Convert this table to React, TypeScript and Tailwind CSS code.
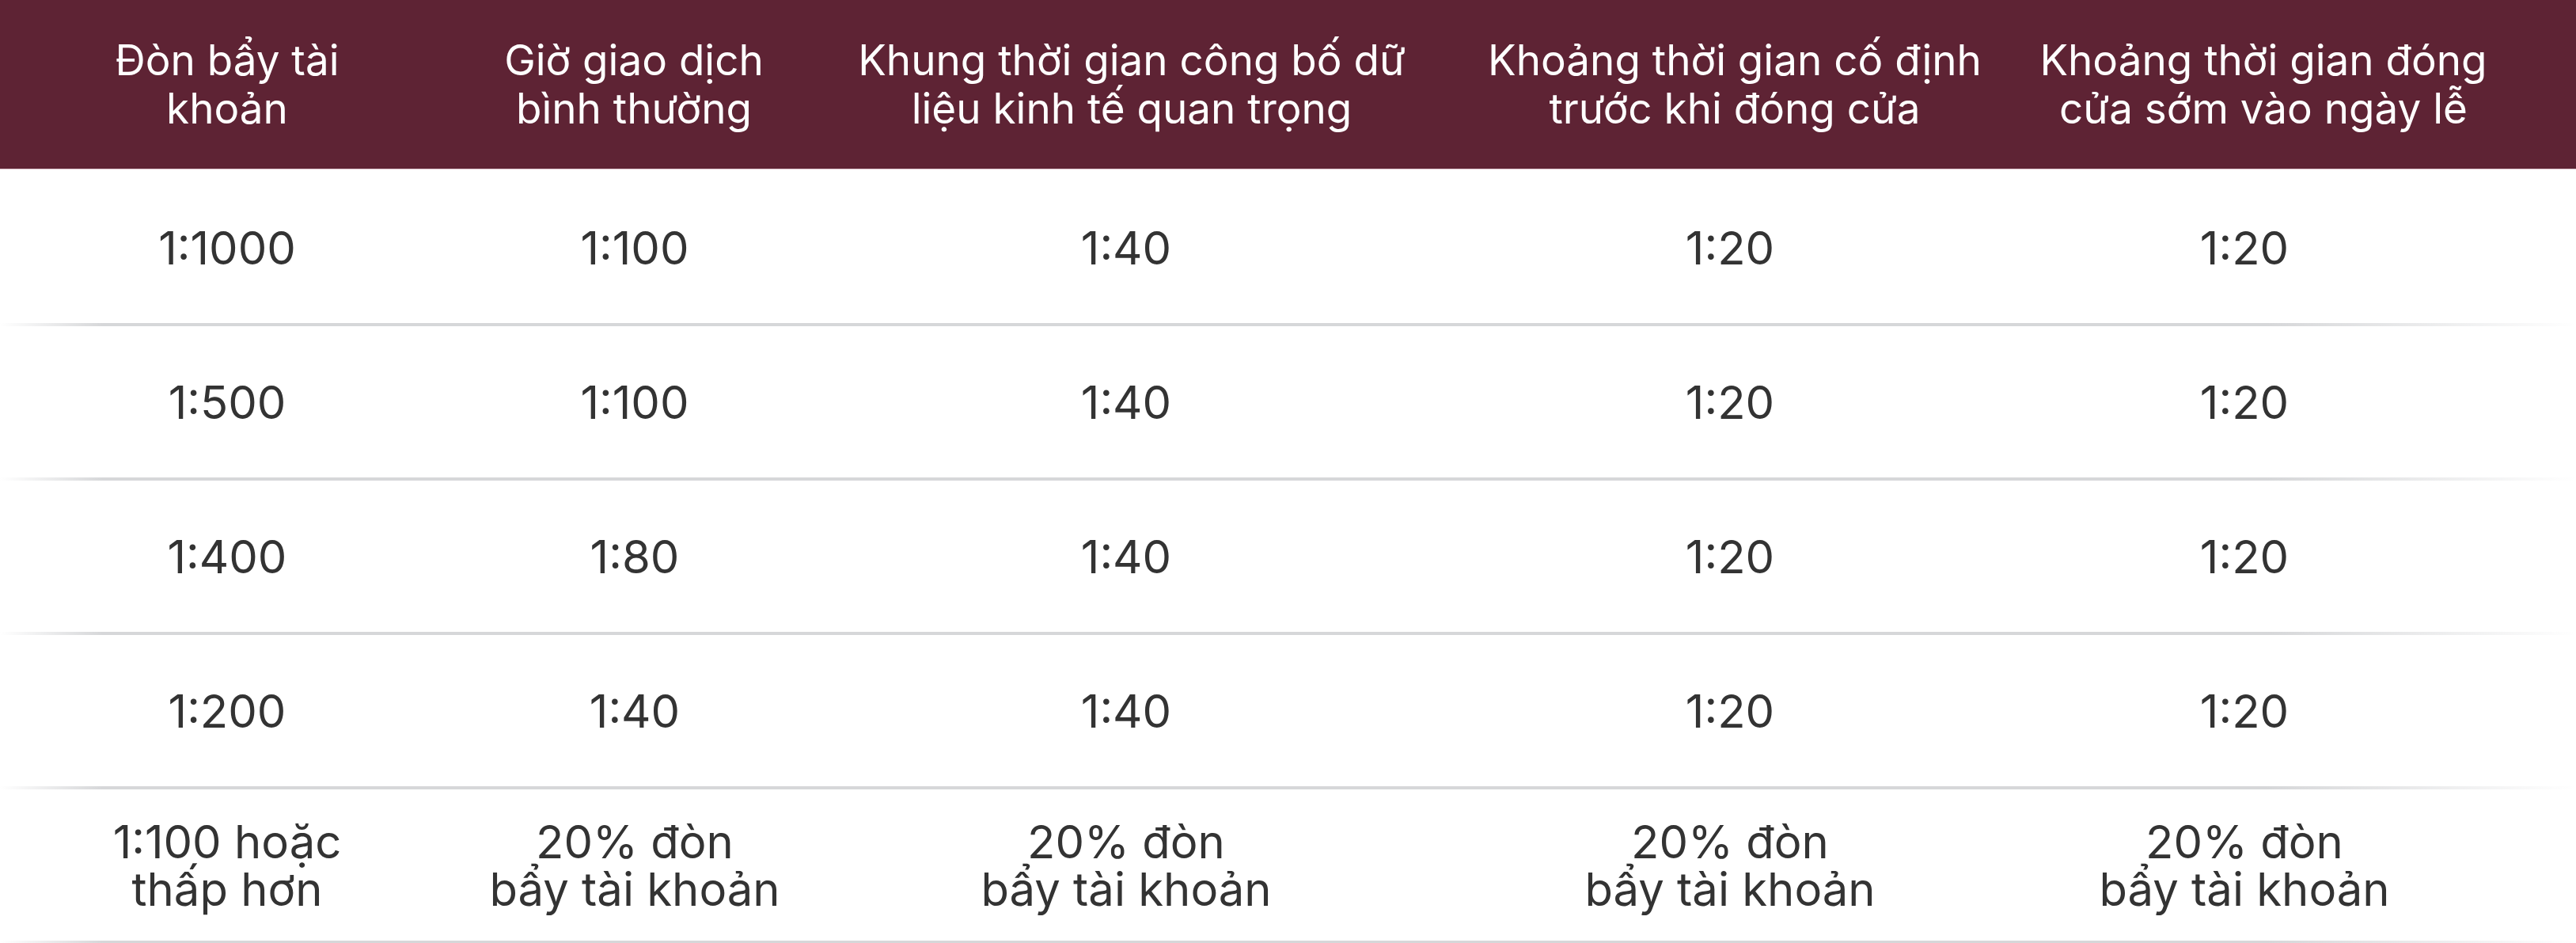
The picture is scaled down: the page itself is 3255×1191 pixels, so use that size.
const headers: [string, string][] = [
  ["Đòn bẩy tài", "khoản"],
  ["Giờ giao dịch", "bình thường"],
  ["Khung thời gian công bố dữ", "liệu kinh tế quan trọng"],
  ["Khoảng thời gian cố định", "trước khi đóng cửa"],
  ["Khoảng thời gian đóng", "cửa sớm vào ngày lễ"],
];

type Cell = string | [string, string];

const rows: Cell[][] = [
  ["1:1000", "1:100", "1:40", "1:20", "1:20"],
  ["1:500", "1:100", "1:40", "1:20", "1:20"],
  ["1:400", "1:80", "1:40", "1:20", "1:20"],
  ["1:200", "1:40", "1:40", "1:20", "1:20"],
  [
    ["1:100 hoặc", "thấp hơn"],
    ["20% đòn", "bẩy tài khoản"],
    ["20% đòn", "bẩy tài khoản"],
    ["20% đòn", "bẩy tài khoản"],
    ["20% đòn", "bẩy tài khoản"],
  ],
];

function Divider() {
  return (
    <div className="h-1 w-full bg-[linear-gradient(90deg,#ffffff_0%,#d6d7d9_4%,#d6d7d9_88%,#ffffff_100%)]" />
  );
}

export default function App() {
  return (
    <div className="w-[3255px] bg-white font-['Inter','Liberation_Sans',sans-serif]">
      <div className="grid h-[214px] grid-cols-[574px_454px_804px_720px_1fr] items-center border-b border-[#dcc3cc] bg-[#5e2334] pr-[87px] text-[53px] leading-[61px] text-white">
        {headers.map(([a, b]) => (
          <div key={a} className="text-center">
            {a}
            <br />
            {b}
          </div>
        ))}
      </div>
      <div className="h-[3px]" />
      {rows.map((row, i) => (
        <div key={i} className="flex h-[195px] flex-col">
          <div className="grid flex-1 grid-cols-[574px_456px_786px_740px_1fr] items-center pr-[139px] text-[58px] leading-[60px] text-[#333333]">
            {row.map((cell, j) => (
              <div key={j} className="text-center">
                {typeof cell === "string" ? (
                  cell
                ) : (
                  <>
                    {cell[0]}
                    <br />
                    {cell[1]}
                  </>
                )}
              </div>
            ))}
          </div>
          <Divider />
        </div>
      ))}
    </div>
  );
}
